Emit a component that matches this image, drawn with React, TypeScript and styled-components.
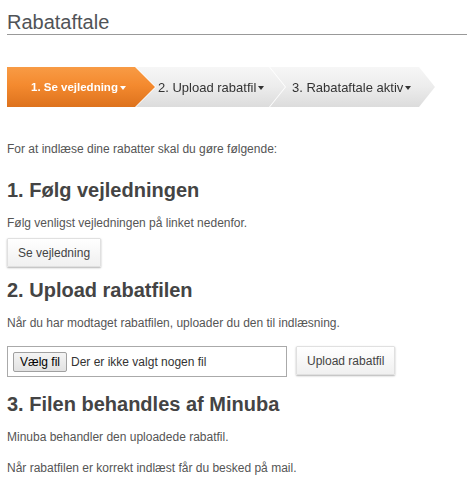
import React from "react";
import styled, { createGlobalStyle } from "styled-components";

const GlobalStyle = createGlobalStyle`
  body {
    margin: 0;
    background: #fff;
    font-family: "Liberation Sans", Arial, sans-serif;
    color: #555;
  }
`;

const Page = styled.main`
  padding: 0 0 0 7px;
`;

const Title = styled.h1`
  margin: 10px 0 0;
  font-size: 20px;
  line-height: 24px;
  font-weight: normal;
  color: #505357;
  border-bottom: 1px solid #999;
`;

const Steps = styled.nav`
  display: flex;
  margin-top: 32px;
  height: 40px;
`;

const StepWrap = styled.div<{ $z: number; $overlap: number }>`
  position: relative;
  z-index: ${(p) => p.$z};
  margin-left: ${(p) => -p.$overlap}px;
  filter: drop-shadow(1px 0 0 #fff);
`;

const Step = styled.div<{ $width: number; $pad: number; $depth: number; $active?: boolean }>`
  display: flex;
  align-items: center;
  box-sizing: border-box;
  height: 40px;
  width: ${(p) => p.$width}px;
  padding-left: ${(p) => p.$pad}px;
  font-size: ${(p) => (p.$active ? "11.5px" : "13px")};
  font-weight: ${(p) => (p.$active ? "bold" : "normal")};
  color: ${(p) => (p.$active ? "#fff" : "#333")};
  background: ${(p) =>
    p.$active
      ? "linear-gradient(#f89b45, #f48a2f 45%, #dd721d)"
      : "linear-gradient(#f6f6f6, #ececec 50%, #dcdcdc)"};
  clip-path: polygon(
    0 0,
    calc(100% - ${(p) => p.$depth}px) 0,
    100% 50%,
    calc(100% - ${(p) => p.$depth}px) 100%,
    0 100%
  );
`;

const Caret = styled.span`
  display: inline-block;
  margin-left: 2px;
  margin-top: 1px;
  border-left: 3.5px solid transparent;
  border-right: 3.5px solid transparent;
  border-top: 4px solid currentColor;
`;

const Text = styled.p<{ $gap: number; $top?: number }>`
  margin: ${(p) => p.$top ?? 0}px 0 ${(p) => p.$gap}px;
  font-size: 12px;
  line-height: 18px;
  color: #555;
`;

const Heading = styled.h2`
  margin: 0 0 12px;
  font-size: 20px;
  line-height: 24px;
  font-weight: bold;
  color: #444;
`;

const Button = styled.button<{ $gap?: number }>`
  display: block;
  height: 29px;
  padding: 0 10px;
  margin: 0 0 ${(p) => p.$gap ?? 0}px;
  font-family: "Liberation Sans", Arial, sans-serif;
  font-size: 12px;
  color: #444;
  background: linear-gradient(#fff, #f0f0f0);
  border: 1px solid #e0e0e0;
  border-radius: 1px;
  box-shadow: 0 1px 2px rgba(0, 0, 0, 0.3);
`;

const UploadRow = styled.div`
  display: flex;
  align-items: flex-start;
  gap: 9px;
  margin-bottom: 15px;
`;

const FileBox = styled.div`
  display: flex;
  align-items: center;
  gap: 4px;
  box-sizing: border-box;
  width: 280px;
  height: 31px;
  padding: 0 5px;
  border: 1px solid #aaa;
  font-size: 12px;
  color: #333;
`;

const ChooseButton = styled.span`
  display: inline-flex;
  align-items: center;
  box-sizing: border-box;
  height: 20px;
  padding: 0 6px;
  color: #000;
  background: linear-gradient(#f4f4f4, #e2e2e2);
  border: 1px solid #a0a0a0;
  border-radius: 2px;
`;

export default function App() {
  return (
    <Page>
      <GlobalStyle />
      <Title>Rabataftale</Title>

      <Steps>
        <StepWrap $z={3} $overlap={0}>
          <Step $width={148} $pad={24} $depth={20} $active>
            1. Se vejledning
            <Caret />
          </Step>
        </StepWrap>
        <StepWrap $z={2} $overlap={20}>
          <Step $width={150} $pad={23} $depth={16}>
            2. Upload rabatfil
            <Caret />
          </Step>
        </StepWrap>
        <StepWrap $z={1} $overlap={16}>
          <Step $width={166} $pad={23} $depth={16}>
            3. Rabataftale aktiv
            <Caret />
          </Step>
        </StepWrap>
      </Steps>

      <Text $top={33} $gap={20}>
        For at indlæse dine rabatter skal du gøre følgende:
      </Text>

      <Heading>1. Følg vejledningen</Heading>
      <Text $gap={6}>Følg venligst vejledningen på linket nedenfor.</Text>
      <Button $gap={11}>Se vejledning</Button>

      <Heading>2. Upload rabatfilen</Heading>
      <Text $gap={14}>
        Når du har modtaget rabatfilen, uploader du den til indlæsning.
      </Text>
      <UploadRow>
        <FileBox>
          <ChooseButton>Vælg fil</ChooseButton>
          Der er ikke valgt nogen fil
        </FileBox>
        <Button>Upload rabatfil</Button>
      </UploadRow>

      <Heading>3. Filen behandles af Minuba</Heading>
      <Text $gap={13}>Minuba behandler den uploadede rabatfil.</Text>
      <Text $gap={0}>Når rabatfilen er korrekt indlæst får du besked på mail.</Text>
    </Page>
  );
}
